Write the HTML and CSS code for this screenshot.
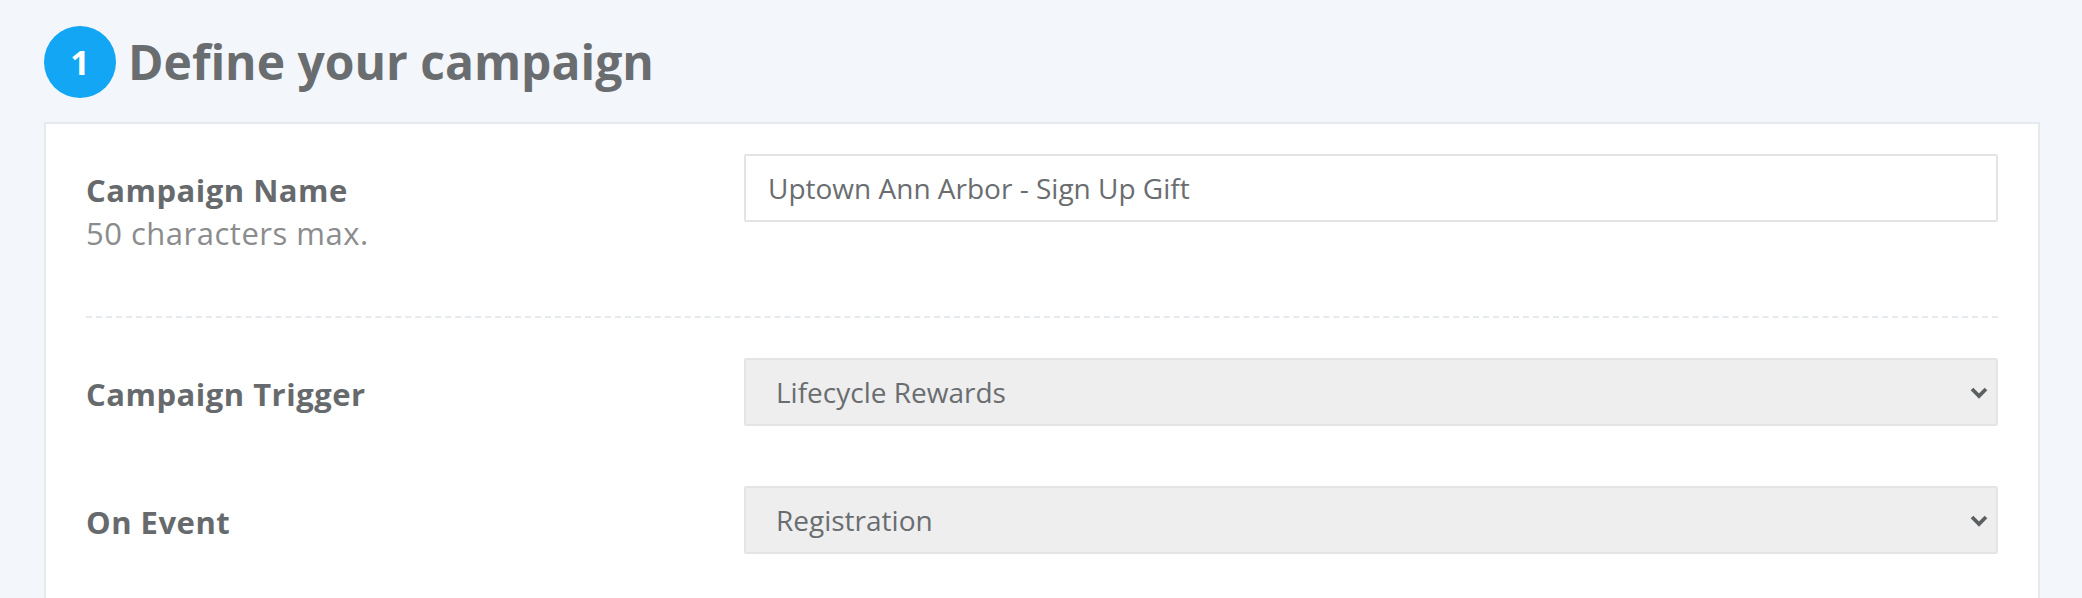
FILE: index.html
```html
<!DOCTYPE html>
<html lang="en">
<head>
<meta charset="utf-8">
<title>Define your campaign</title>
<link rel="stylesheet" href="styles.css">
</head>
<body>
<div class="page">
  <div class="step-head">
    <div class="step-num">1</div>
    <h1 class="step-title">Define your campaign</h1>
  </div>
  <div class="card">
    <div class="row row-first">
      <div class="label-col">
        <div class="label">Campaign Name</div>
        <div class="hint">50 characters max.</div>
      </div>
      <div class="field-col">
        <input class="text-input" type="text" value="Uptown Ann Arbor - Sign Up Gift">
      </div>
    </div>
    <div class="divider"></div>
    <div class="row">
      <div class="label-col">
        <div class="label">Campaign Trigger</div>
      </div>
      <div class="field-col">
        <div class="select">
          <span class="select-text">Lifecycle Rewards</span>
          <svg class="chev" width="18" height="12" viewBox="0 0 18 12"><polyline points="2,2 9,9 16,2" fill="none" stroke="#5d6063" stroke-width="3.8" stroke-linecap="butt" stroke-linejoin="miter"/></svg>
        </div>
      </div>
    </div>
    <div class="row">
      <div class="label-col">
        <div class="label">On Event</div>
      </div>
      <div class="field-col">
        <div class="select">
          <span class="select-text">Registration</span>
          <svg class="chev" width="18" height="12" viewBox="0 0 18 12"><polyline points="2,2 9,9 16,2" fill="none" stroke="#5d6063" stroke-width="3.8" stroke-linecap="butt" stroke-linejoin="miter"/></svg>
        </div>
      </div>
    </div>
  </div>
</div>
</body>
</html>
```

FILE: styles.css
```css
html, body {
  margin: 0;
  padding: 0;
  background: #f3f6fa;
  font-family: "Open Sans", "Liberation Sans", sans-serif;
  color: #6a6d70;
  overflow: hidden;
}

.page {
  padding: 26px 42px 0 44px;
}

.step-head {
  display: flex;
  align-items: center;
  gap: 12px;
  height: 72px;
}

.step-num {
  width: 72px;
  height: 72px;
  border-radius: 50%;
  background: #12a6f4;
  color: #ffffff;
  font-weight: 700;
  font-size: 34px;
  display: flex;
  align-items: center;
  justify-content: center;
  flex-shrink: 0;
}

.step-title {
  margin: 0;
  font-size: 48px;
  font-weight: 700;
  color: #6a6d70;
  line-height: 72px;
}

.card {
  margin-top: 24px;
  background: #ffffff;
  border: 2px solid #e6e9ee;
  padding: 0 40px 40px;
  min-height: 600px;
}

.row {
  display: grid;
  grid-template-columns: 658px 1fr;
  padding: 30px 0;
}

.row-first {
  padding-bottom: 30px;
}

.label-col {
  padding-top: 15px;
}

.label {
  font-size: 31px;
  font-weight: 700;
  letter-spacing: 0.5px;
  line-height: 43px;
  color: #676a6d;
}

.hint {
  font-size: 31px;
  font-weight: 400;
  letter-spacing: 0.5px;
  line-height: 43px;
  color: #8b8c8d;
}

.text-input {
  display: block;
  box-sizing: border-box;
  width: 100%;
  height: 68px;
  margin: 0;
  padding: 0 22px;
  border: 2px solid #e4e4e4;
  border-radius: 2px;
  background: #ffffff;
  font-family: "Open Sans", "Liberation Sans", sans-serif;
  font-size: 28px;
  color: #6a6d70;
  outline: none;
}

.divider {
  margin: 31px 0 10px;
  height: 0;
  border-top: 2px dashed #e6e9ee;
}

.select {
  box-sizing: border-box;
  height: 68px;
  display: flex;
  align-items: center;
  justify-content: space-between;
  padding: 0 8px 0 30px;
  border: 2px solid #e4e4e4;
  border-radius: 2px;
  background: #eeeeee;
}

.select-text {
  font-size: 28px;
  color: #6a6d70;
}

.chev {
  display: block;
  margin-top: 2px;
}
```
